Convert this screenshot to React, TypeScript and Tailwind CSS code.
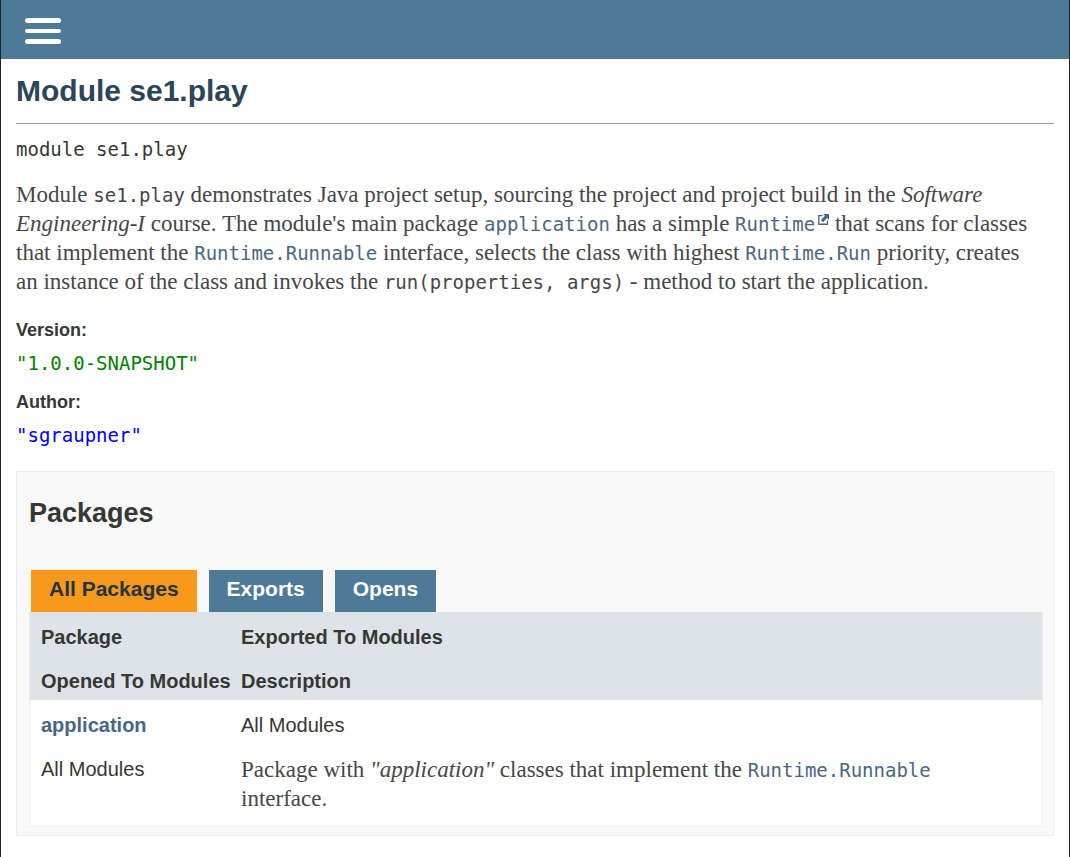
import type { ReactNode } from "react";

const sans = "font-['Liberation_Sans',sans-serif]";
const serif = "font-['Liberation_Serif',serif]";
const mono = "font-['DejaVu_Sans_Mono',monospace]";

function Code({ children }: { children: ReactNode }) {
  return <code className={`${mono} text-[19px] leading-none`}>{children}</code>;
}

function CodeLink({ href, children }: { href: string; children: ReactNode }) {
  return (
    <a href={href} className="text-[#4a6782] hover:text-[#bb7a2a]">
      <Code>{children}</Code>
    </a>
  );
}

function ExternalIcon() {
  return (
    <svg
      viewBox="0 0 100 100"
      className="ml-[3px] inline-block h-[11px] w-[11px] align-[6px]"
      aria-hidden="true"
    >
      <path d="M42 14H7v79h79V58" fill="none" stroke="#4a6782" strokeWidth="12" />
      <path d="M46 0h54v54L83 37 46 74 26 54l37-37z" fill="#4a6782" />
    </svg>
  );
}

const tabs = ["All Packages", "Exports", "Opens"];
const headings = ["Package", "Exported To Modules", "Opened To Modules", "Description"];
const row = "grid grid-cols-[200px_1fr] px-[11px]";

export default function App() {
  return (
    <div className={`${sans} flex min-h-screen flex-col border-x border-[#242424] bg-white text-[#353833]`}>
      <header className="flex h-[59px] items-center bg-[#4d7a97] px-6">
        <button type="button" aria-label="Toggle navigation links" className="mt-[3px] flex w-9 flex-col gap-[6px]">
          <span className="h-[5px] w-full rounded-sm bg-white" />
          <span className="h-1 w-full rounded-sm bg-white" />
          <span className="h-[5px] w-full rounded-sm bg-white" />
        </button>
      </header>

      <main className="px-[15px] pb-5">
        <h1 className="pt-[14px] text-[30px] leading-9 font-bold text-[#2c4557]">Module se1.play</h1>
        <hr className="mt-[14px] border-[#999b9d]" />
        <div className={`${mono} mt-3 text-[19px] leading-[26px]`}>module se1.play</div>

        <p className={`${serif} mt-[18px] pr-3 text-[23px] leading-[29px] text-[#474747]`}>
          Module <Code>se1.play</Code> demonstrates Java project setup, sourcing the project and project
          build in the <em>Software Engineering-I</em> course. The module's main package{" "}
          <CodeLink href="#application">application</CodeLink> has a simple{" "}
          <a href="#runtime" className="text-[#4a6782] hover:text-[#bb7a2a]">
            <Code>Runtime</Code>
            <ExternalIcon />
          </a>{" "}
          that scans for classes that implement the <CodeLink href="#runnable">Runtime.Runnable</CodeLink>{" "}
          interface, selects the class with highest <CodeLink href="#run">Runtime.Run</CodeLink> priority,
          creates an instance of the class and invokes the <Code>run(properties, args)</Code> - method to
          start the application.
        </p>

        <dl className="mt-[22px]">
          <dt className="text-lg leading-6 font-bold">Version:</dt>
          <dd className={`${mono} mt-2 text-[19px] leading-[26px] text-[#008000]`}>"1.0.0-SNAPSHOT"</dd>
          <dt className="mt-[14px] text-lg leading-6 font-bold">Author:</dt>
          <dd className={`${mono} mt-2 text-[19px] leading-[26px] text-[#0000ff]`}>"sgraupner"</dd>
        </dl>

        <section className="mt-[23px] border border-[#ededed] bg-[#f8f8f8] pt-[25px] pr-[10px] pb-2 pl-3">
          <h2 className="text-[27px] leading-8 font-bold">Packages</h2>
          <div className="mt-[41px] flex gap-3 px-[2px]" role="tablist">
            {tabs.map((tab, i) => (
              <button
                key={tab}
                type="button"
                role="tab"
                aria-selected={i === 0}
                className={`h-[42px] px-[18px] pb-1 text-[21px] font-bold ${
                  i === 0 ? "bg-[#f8981d] text-[#253441]" : "bg-[#4d7a97] text-white"
                }`}
              >
                {tab}
              </button>
            ))}
          </div>
          <table className="block border border-t-0 border-[#eeeeee] bg-white text-xl">
            <thead className="block bg-[#dee3e9]">
              <tr className={row}>
                {headings.map((heading) => (
                  <th key={heading} scope="col" className="h-11 pt-[11px] text-left leading-7 font-bold whitespace-nowrap">
                    {heading}
                  </th>
                ))}
              </tr>
            </thead>
            <tbody className="block">
              <tr className={row}>
                <th scope="row" className="h-11 pt-[11px] text-left leading-7 font-bold">
                  <a href="#application" className="text-[#4a6782] hover:text-[#bb7a2a]">
                    application
                  </a>
                </th>
                <td className="h-11 pt-[11px] leading-7">All Modules</td>
                <td className="pt-[11px] leading-7">All Modules</td>
                <td className={`${serif} pt-[11px] pr-8 pb-[13px] text-[23px] leading-[29px] text-[#474747]`}>
                  Package with <em>"application"</em> classes that implement the{" "}
                  <CodeLink href="#runnable">Runtime.Runnable</CodeLink> interface.
                </td>
              </tr>
            </tbody>
          </table>
        </section>
      </main>
    </div>
  );
}
